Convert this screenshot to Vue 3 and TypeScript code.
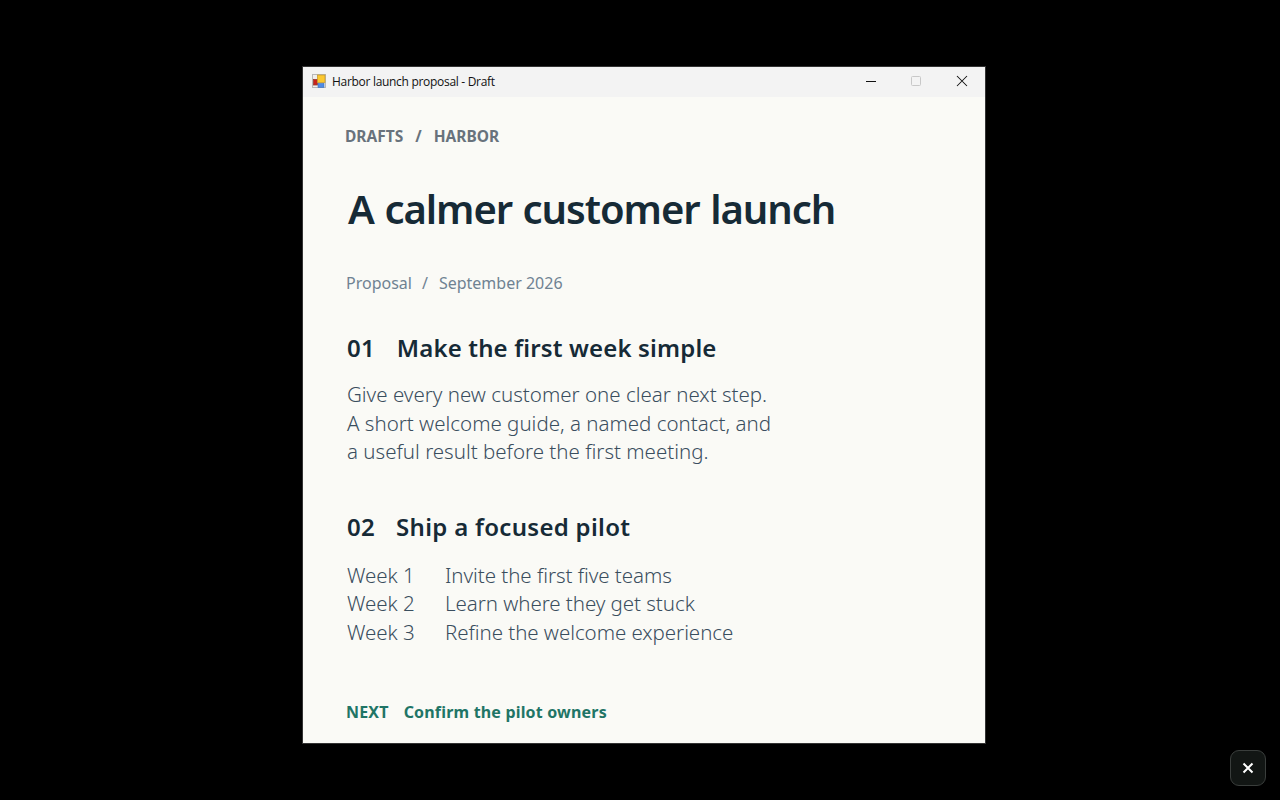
<script setup lang="ts">
const weeks = [
  { label: 'Week 1', text: 'Invite the first five teams' },
  { label: 'Week 2', text: 'Learn where they get stuck' },
  { label: 'Week 3', text: 'Refine the welcome experience' },
]
</script>

<template>
  <div class="stage">
    <div class="window">
      <div class="titlebar">
        <svg class="appicon" width="15" height="15" viewBox="0 0 15 15">
          <rect x="0.5" y="0.5" width="13" height="13" fill="#efefef" stroke="#b8b8b8" />
          <rect x="1.5" y="5.5" width="4" height="5.5" fill="#c8241c" stroke="#9a3a30" stroke-width="0.8" />
          <rect x="5.5" y="1" width="7.5" height="7.5" fill="#fcc82f" stroke="#c79c30" stroke-width="0.8" />
          <rect x="6" y="9.5" width="6" height="4" fill="#4f8be6" stroke="#3f70ba" stroke-width="0.6" />
        </svg>
        <span class="wintitle">Harbor launch proposal - Draft</span>
        <div class="controls">
          <svg class="ctl" width="45" height="29" viewBox="0 0 45 29"><path d="M17 14.5h10" stroke="#111" stroke-width="1" /></svg>
          <svg class="ctl" width="45" height="29" viewBox="0 0 45 29"><rect x="17.5" y="9.5" width="9" height="9" rx="1" fill="none" stroke="#c8c8c8" /></svg>
          <svg class="ctl" width="45" height="29" viewBox="0 0 45 29"><path d="M18 9l10 10M28 9L18 19" stroke="#111" stroke-width="1.05" fill="none" /></svg>
        </div>
      </div>
      <div class="content">
        <div class="crumbs"><span>DRAFTS</span><span class="sl">/</span><span>HARBOR</span></div>
        <h1>A calmer customer launch</h1>
        <div class="meta"><span>Proposal</span><span class="msl">/</span><span>September 2026</span></div>
        <h2 class="h1st"><span class="num">01</span>Make the first week simple</h2>
        <p class="para">Give every new customer one clear next step.<br />A short welcome guide, a named contact, and<br />a useful result before the first meeting.</p>
        <h2 class="h2nd"><span class="num">02</span>Ship a focused pilot</h2>
        <div class="weeks">
          <div v-for="w in weeks" :key="w.label" class="week"><span class="wl">{{ w.label }}</span><span>{{ w.text }}</span></div>
        </div>
        <div class="next"><span class="nl">NEXT</span>Confirm the pilot owners</div>
      </div>
    </div>
    <button class="close" aria-label="Close">
      <svg width="12" height="12" viewBox="0 0 12 12"><path d="M1.5 1.5l9 9M10.5 1.5l-9 9" stroke="#fff" stroke-width="2" /></svg>
    </button>
  </div>
</template>

<style>
html, body { margin: 0; background: #000; }
</style>

<style scoped>
.stage {
  position: relative;
  width: 1280px;
  height: 800px;
  background: #000;
  padding: 66px 0 0 302px;
  box-sizing: border-box;
  font-family: "Noto Sans", sans-serif;
  overflow: hidden;
}
.window {
  width: 684px;
  height: 678px;
  box-sizing: border-box;
  border: 1px solid #333;
  background: #fafaf6;
  display: flex;
  flex-direction: column;
}
.titlebar {
  height: 30px;
  background: #f3f3f3;
  display: flex;
  align-items: center;
  padding-left: 9px;
  flex: none;
}
.appicon { flex: none; margin-bottom: 1px; }
.wintitle {
  margin: 0 0 2px 5px;
  font-size: 12px;
  color: #111;
  font-family: "Open Sans", sans-serif;
  letter-spacing: -0.3px;
}
.controls { margin: 0 1px 1px auto; display: flex; }
.ctl { display: block; }
.content { padding: 28px 0 0 44px; color: #162a36; }
.crumbs {
  font-size: 15.5px;
  font-weight: 700;
  line-height: 22px;
  color: #68727c;
  display: flex;
  margin-left: -2px;
}
.sl { margin: 0 12px; }
h1 {
  margin: 33px 0 0 1px;
  font-size: 40px;
  line-height: 58px;
  font-weight: 600;
  letter-spacing: -1.05px;
  word-spacing: 1.2px;
  color: #162a36;
}
.meta {
  margin: 33px 0 0 -1px;
  font-size: 16px;
  line-height: 24px;
  color: #6f8292;
  display: flex;
}
.msl { margin: 0 11px 0 10px; }
h2 {
  margin: 0;
  font-size: 24px;
  line-height: 34px;
  font-weight: 600;
  color: #162a36;
  display: flex;
}
.h1st { margin-top: 36px; letter-spacing: 0.15px; }
.h2nd { margin-top: 44px; letter-spacing: 0.3px; }
.h2nd .num { margin-right: 21px; }
.num { margin-right: 22px; }
.para {
  margin: 15px 0 0;
  font-size: 20.5px;
  line-height: 28.5px;
  font-weight: 300;
  color: #3a4e5e;
}
.weeks {
  margin-top: 17px;
  font-size: 20.5px;
  line-height: 28.5px;
  font-weight: 300;
  letter-spacing: -0.05px;
  color: #3a4e5e;
}
.week { display: flex; }
.wl { width: 98px; }
.next {
  margin: 54px 0 0 -1px;
  font-size: 16px;
  line-height: 24px;
  font-weight: 700;
  letter-spacing: 0.18px;
  color: #1f7566;
  display: flex;
}
.nl { margin-right: 15px; }
.close {
  position: absolute;
  left: 1230px;
  top: 750px;
  width: 36px;
  height: 36px;
  box-sizing: border-box;
  border: 1px solid #3a3e3c;
  border-radius: 9px;
  background: #121614;
  padding: 0;
  display: flex;
  align-items: center;
  justify-content: center;
}
</style>
